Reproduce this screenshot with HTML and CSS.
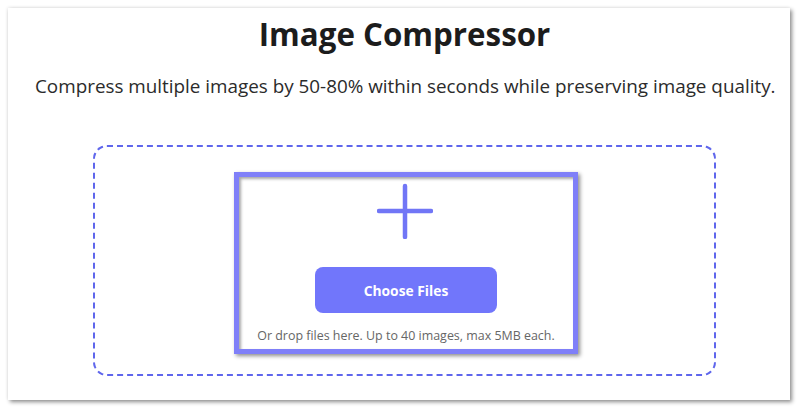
FILE: index.html
```html
<!DOCTYPE html>
<html lang="en">
<head>
<meta charset="utf-8">
<title>Image Compressor</title>
<link rel="stylesheet" href="styles.css">
</head>
<body>
<main class="card">
  <h1 class="title">Image Compressor</h1>
  <p class="subtitle">Compress multiple images by 50-80% within seconds while preserving image quality.</p>
  <section class="dropzone">
    <div class="highlight">
      <svg class="plus" width="56" height="56" viewBox="0 0 56 56" aria-hidden="true">
        <path d="M28 3 V54 M2 28 H54" stroke="#7176f6" stroke-width="4.5" stroke-linecap="round" fill="none"/>
      </svg>
      <button class="choose" type="button">Choose Files</button>
      <p class="hint">Or drop files here. Up to 40 images, max 5MB each.</p>
    </div>
  </section>
</main>
</body>
</html>
```
FILE: styles.css
```css
html, body {
  margin: 0;
  padding: 0;
  background: #ffffff;
}

body {
  font-family: "Open Sans", "Noto Sans", sans-serif;
  color: #222;
}

.card {
  margin: 8px 10px 9px 8px;
  height: 392px;
  box-sizing: border-box;
  padding: 0 16px 0 27px;
  background: #fff;
  box-shadow: 2px 2px 4px rgba(0, 0, 0, 0.45), -1px -1px 3px rgba(0, 0, 0, 0.06);
  display: flex;
  flex-direction: column;
  align-items: stretch;
}

.title {
  margin: 4px 0 0;
  text-align: center;
  font-size: 31.3px;
  font-weight: 700;
  line-height: 44px;
  color: #1c1c1c;
}

.subtitle {
  margin: 17px 0 0;
  text-align: center;
  font-size: 18.85px;
  line-height: 26px;
  white-space: nowrap;
  color: #2b2b2b;
}

.dropzone {
  margin: 46px 58px 0;
  height: 231px;
  box-sizing: border-box;
  border: 2px dashed #5f66ec;
  border-radius: 14px;
  display: flex;
  justify-content: center;
  padding-top: 25px;
  padding-left: 3px;
}

.highlight {
  width: 344px;
  height: 182px;
  box-sizing: border-box;
  border: 5px solid #7f7ff8;
  box-shadow: 2px 2px 4px rgba(0, 0, 0, 0.45), inset 2px 2px 3px rgba(0, 0, 0, 0.35);
  display: flex;
  flex-direction: column;
  align-items: center;
  padding-top: 6px;
}

.plus {
  display: block;
  margin-left: -2px;
}

.choose {
  margin-top: 28px;
  width: 182px;
  height: 46px;
  border: none;
  border-radius: 8px;
  background: #7176fb;
  color: #fff;
  font-family: inherit;
  font-size: 13.8px;
  font-weight: 700;
}

.hint {
  margin: 14px 0 0;
  font-size: 12.45px;
  color: #666;
}
```
